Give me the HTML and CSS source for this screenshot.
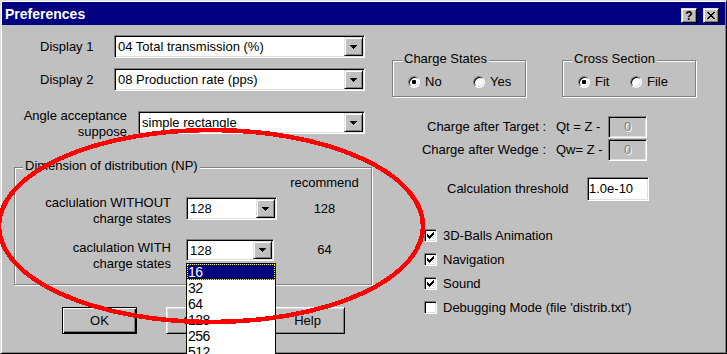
FILE: index.html
```html
<!DOCTYPE html>
<html lang="en">
<head>
    <meta charset="UTF-8">
    <title>Preferences</title>
    <link rel="stylesheet" href="styles.css">
</head>
<body>
<div class="window">
    <div class="titlebar">
        <span class="title">Preferences</span>
        <span class="tb-buttons">
            <span class="tb-btn">?</span>
            <span class="tb-btn">
                <svg width="8" height="7" viewBox="0 0 8 7"><path d="M0 0h2v1H0zM6 0h2v1H6zM1 1h2v1H1zM5 1h2v1H5zM2 2h4v1H2zM3 3h2v1H3zM2 4h4v1H2zM1 5h2v1H1zM5 5h2v1H5zM0 6h2v1H0zM6 6h2v1H6z" fill="#000"/></svg>
            </span>
        </span>
    </div>

    <div class="client">
        <div class="left">
            <div class="row row-display">
                <span class="lbl-display">Display 1</span>
                <div class="combo w-display">
                    <span class="combo-text">04 Total transmission (%)</span>
                    <span class="combo-btn"><svg width="7" height="4" viewBox="0 0 7 4"><path d="M0 0h7v1H0zM1 1h5v1H1zM2 2h3v1H2zM3 3h1v1H3z" fill="#000"/></svg></span>
                </div>
            </div>
            <div class="row row-display">
                <span class="lbl-display">Display 2</span>
                <div class="combo w-display">
                    <span class="combo-text">08 Production rate (pps)</span>
                    <span class="combo-btn"><svg width="7" height="4" viewBox="0 0 7 4"><path d="M0 0h7v1H0zM1 1h5v1H1zM2 2h3v1H2zM3 3h1v1H3z" fill="#000"/></svg></span>
                </div>
            </div>
            <div class="row row-angle">
                <span class="lbl-angle">Angle acceptance<br>suppose</span>
                <div class="combo w-angle">
                    <span class="combo-text">simple rectangle</span>
                    <span class="combo-btn"><svg width="7" height="4" viewBox="0 0 7 4"><path d="M0 0h7v1H0zM1 1h5v1H1zM2 2h3v1H2zM3 3h1v1H3z" fill="#000"/></svg></span>
                </div>
            </div>

            <div class="group group-np">
                <span class="legend legend-np">Dimension of distribution (NP)</span>
                <div class="np-head">recommend</div>
                <div class="np-row np-row1">
                    <span class="np-label">caclulation WITHOUT<br>charge states</span>
                    <div class="combo np-combo1">
                        <span class="combo-text">128</span>
                        <span class="combo-btn"><svg width="7" height="4" viewBox="0 0 7 4"><path d="M0 0h7v1H0zM1 1h5v1H1zM2 2h3v1H2zM3 3h1v1H3z" fill="#000"/></svg></span>
                    </div>
                    <span class="np-value np-value1">128</span>
                </div>
                <div class="np-row np-row2">
                    <span class="np-label">caclulation WITH<br>charge states</span>
                    <div class="combo np-combo2">
                        <span class="combo-text">128</span>
                        <span class="combo-btn"><svg width="7" height="4" viewBox="0 0 7 4"><path d="M0 0h7v1H0zM1 1h5v1H1zM2 2h3v1H2zM3 3h1v1H3z" fill="#000"/></svg></span>
                    </div>
                    <span class="np-value np-value2">64</span>
                </div>
            </div>

            <div class="buttons">
                <div class="btn btn-default">OK</div>
                <div class="btn">Cancel</div>
                <div class="btn">Help</div>
            </div>
        </div>

        <div class="right">
            <div class="groups-top">
                <div class="group group-small charge">
                    <span class="legend">Charge States</span>
                    <div class="radios">
                        <span class="radio-item"><span class="radio on"></span>No</span>
                        <span class="radio-item"><span class="radio"></span>Yes</span>
                    </div>
                </div>
                <div class="group group-small cross">
                    <span class="legend">Cross Section</span>
                    <div class="radios">
                        <span class="radio-item"><span class="radio on"></span>Fit</span>
                        <span class="radio-item"><span class="radio"></span>File</span>
                    </div>
                </div>
            </div>

            <div class="charge-grid">
                <span class="cg-label">Charge after Target :</span>
                <span class="cg-eq">Qt = Z -</span>
                <span class="field disabled">0</span>
                <span class="cg-label">Charge after Wedge :</span>
                <span class="cg-eq">Qw= Z -</span>
                <span class="field disabled">0</span>
            </div>

            <div class="thresh">
                <span class="thresh-label">Calculation threshold</span>
                <span class="field thresh-input">1.0e-10</span>
            </div>

            <div class="checks">
                <div class="check-row"><span class="checkbox"><svg width="7" height="7" viewBox="0 0 7 7"><path d="M6 0h1v1H6zM5 1h2v1H5zM0 2h1v1H0zM4 2h3v1H4zM0 3h2v1H0zM3 3h3v1H3zM0 4h5v1H0zM1 5h3v1H1zM2 6h1v1H2z" fill="#000"/></svg></span>3D-Balls Animation</div>
                <div class="check-row"><span class="checkbox"><svg width="7" height="7" viewBox="0 0 7 7"><path d="M6 0h1v1H6zM5 1h2v1H5zM0 2h1v1H0zM4 2h3v1H4zM0 3h2v1H0zM3 3h3v1H3zM0 4h5v1H0zM1 5h3v1H1zM2 6h1v1H2z" fill="#000"/></svg></span>Navigation</div>
                <div class="check-row"><span class="checkbox"><svg width="7" height="7" viewBox="0 0 7 7"><path d="M6 0h1v1H6zM5 1h2v1H5zM0 2h1v1H0zM4 2h3v1H4zM0 3h2v1H0zM3 3h3v1H3zM0 4h5v1H0zM1 5h3v1H1zM2 6h1v1H2z" fill="#000"/></svg></span>Sound</div>
                <div class="check-row"><span class="checkbox"></span>Debugging Mode (file 'distrib.txt')</div>
            </div>
        </div>
    </div>

    <ul class="droplist">
        <li class="sel">16</li>
        <li>32</li>
        <li>64</li>
        <li>128</li>
        <li>256</li>
        <li>512</li>
    </ul>

    <svg class="mark" width="727" height="354" viewBox="0 0 727 354">
        <ellipse cx="211" cy="226" rx="212" ry="96" fill="none" stroke="#ff0000" stroke-width="4.5" shape-rendering="crispEdges"/>
    </svg>
</div>
</body>
</html>
```

FILE: styles.css
```css
html, body { margin: 0; padding: 0; overflow: hidden; }
body { font-family: "Liberation Sans", Arial, sans-serif; font-size: 13px; color: #000; background: #c0c0c0; }

.window {
    position: relative;
    width: 727px;
    height: 354px;
    box-sizing: border-box;
    border: 1px solid;
    border-color: #dfdfdf #000 #000 #dfdfdf;
    box-shadow: inset 1px 1px #fff, inset -1px -1px #808080;
    padding: 1px;
    background: #c0c0c0;
}

/* title bar */
.titlebar {
    display: flex;
    justify-content: space-between;
    height: 23px;
    background: #000080;
    color: #fff;
    padding: 0 6px 0 3px;
}
.title { font-weight: bold; font-size: 14px; line-height: 22px; padding-top: 1px; }
.tb-buttons { display: flex; gap: 6px; margin-top: 6px; }
.tb-btn {
    width: 16px;
    height: 15px;
    box-sizing: border-box;
    background: #c0c0c0;
    border: 1px solid;
    border-color: #dfdfdf #000 #000 #dfdfdf;
    box-shadow: inset 1px 1px #fff, inset -1px -1px #808080;
    display: flex;
    align-items: center;
    justify-content: center;
    color: #000;
    font-weight: bold;
    font-size: 12px;
}

.client { display: flex; }
.left { width: 378px; }
.right { flex: 1; }

/* combo boxes */
.combo {
    display: flex;
    box-sizing: border-box;
    height: 23px;
    background: #fff;
    border: 1px solid;
    border-color: #808080 #fff #fff #808080;
    box-shadow: inset 1px 1px #000, inset -1px -1px #dfdfdf;
    padding: 1px;
}
.combo-text { flex: 1; display: flex; align-items: center; padding-left: 2px; }
.combo-btn {
    width: 19px;
    box-sizing: border-box;
    background: #c0c0c0;
    border: 1px solid;
    border-color: #dfdfdf #000 #000 #dfdfdf;
    box-shadow: inset 1px 1px #fff, inset -1px -1px #808080;
    display: flex;
    align-items: center;
    justify-content: center;
}

.row { display: flex; align-items: flex-start; }
.row-display { margin-top: 10px; padding-left: 38px; }
.lbl-display { width: 74px; line-height: 23px; }
.w-display { width: 251px; }
.row-angle { margin-top: 17px; }
.lbl-angle { width: 125px; margin-right: 11px; text-align: right; line-height: 16px; }
.w-angle { width: 227px; margin-top: 3px; }

/* group boxes */
.group {
    box-sizing: border-box;
    border: 1px solid #808080;
    box-shadow: inset 1px 1px #fff, 1px 1px #fff;
}
.legend {
    display: block;
    width: fit-content;
    background: #c0c0c0;
    padding: 0 2px;
    line-height: 16px;
    margin: -10px 0 0 9px;
}
.legend-np { margin-left: 8px; }

.group-np { width: 358px; height: 118px; margin: 27px 0 0 12px; }
.np-head { margin-top: 1px; padding-left: 274px; width: 71px; text-align: center; line-height: 16px; }
.np-row { display: flex; align-items: flex-start; }
.np-row1 { margin-top: 4px; }
.np-row2 { margin-top: 13px; }
.np-label { width: 156px; text-align: right; line-height: 16px; }
.np-combo1 { width: 91px; margin: 2px 0 0 15px; }
.np-combo2 { width: 88px; height: 22px; margin: -1px 0 0 15px; }
.np-value { width: 71px; text-align: center; }
.np-value1 { margin: 2px 0 0 12px; line-height: 23px; }
.np-value2 { margin: -1px 0 0 15px; line-height: 22px; }

/* buttons */
.buttons { display: flex; gap: 29px; margin-top: 22px; padding-left: 60px; }
.btn {
    width: 75px;
    height: 27px;
    box-sizing: border-box;
    border: 1px solid;
    border-color: #fff #000 #000 #fff;
    box-shadow: inset 1px 1px #dfdfdf, inset -1px -1px #808080;
    display: flex;
    align-items: center;
    justify-content: center;
}
.btn-default {
    border-color: #000;
    box-shadow: inset 1px 1px #fff, inset -1px -1px #000, inset -2px -2px #808080;
}

/* right column */
.groups-top { display: flex; gap: 36px; margin: 35px 0 0 12px; }
.group-small { width: 134px; height: 37px; }
.radios { display: flex; margin-top: 7px; padding-left: 15px; line-height: 16px; }
.radio-item { display: flex; align-items: center; gap: 5px; }
.charge .radio-item:first-child { width: 65px; }
.cross .radio-item:first-child { width: 52px; }
.radio {
    position: relative;
    width: 12px;
    height: 12px;
    box-sizing: border-box;
    border-radius: 50%;
    background: #fff;
    border: 1px solid;
    border-color: #808080 #fff #fff #808080;
    box-shadow: inset 1px 1px #000, inset -1px -1px #dfdfdf;
    display: flex;
    align-items: center;
    justify-content: center;
}
.radio.on::after {
    content: "";
    width: 4px;
    height: 4px;
    border-radius: 1px;
    background: #000;
}

.charge-grid {
    display: grid;
    grid-template-columns: 166px 62px 39px;
    grid-auto-rows: 22px;
    row-gap: 1px;
    margin-top: 19px;
    line-height: 22px;
}
.cg-label { text-align: right; }
.cg-eq { padding-left: 10px; }

.field {
    box-sizing: border-box;
    background: #fff;
    border: 1px solid;
    border-color: #808080 #fff #fff #808080;
    box-shadow: inset 1px 1px #000, inset -1px -1px #dfdfdf;
}
.field.disabled { background: #c0c0c0; color: #808080; text-shadow: 1px 1px #fff; text-align: center; line-height: 20px; }

.thresh { display: flex; margin: 16px 0 0 67px; line-height: 24px; }
.thresh-label { width: 140px; }
.thresh-input { width: 62px; height: 24px; line-height: 22px; padding-left: 1px; }

.checks { margin: 22px 0 0 44px; }
.check-row { display: flex; align-items: center; height: 24px; }
.checkbox {
    width: 13px;
    height: 13px;
    box-sizing: border-box;
    margin-right: 6px;
    background: #fff;
    border: 1px solid;
    border-color: #808080 #fff #fff #808080;
    box-shadow: inset 1px 1px #000, inset -1px -1px #dfdfdf;
    display: flex;
    align-items: center;
    justify-content: center;
}

/* open list of the second NP combo */
.droplist {
    position: absolute;
    left: 185px;
    top: 262px;
    width: 90px;
    box-sizing: border-box;
    margin: 0;
    padding: 0;
    list-style: none;
    background: #fff;
    border: 1px solid #000;
    font-size: 14px;
    letter-spacing: -0.5px;
}
.droplist li { height: 16px; line-height: 16px; padding-left: 1px; }
.droplist .sel { background: #000080; color: #fff; outline: 1px dotted #ffff00; outline-offset: -1px; }

/* red hand-drawn mark */
.mark { position: absolute; left: -1px; top: -1px; pointer-events: none; }
```
